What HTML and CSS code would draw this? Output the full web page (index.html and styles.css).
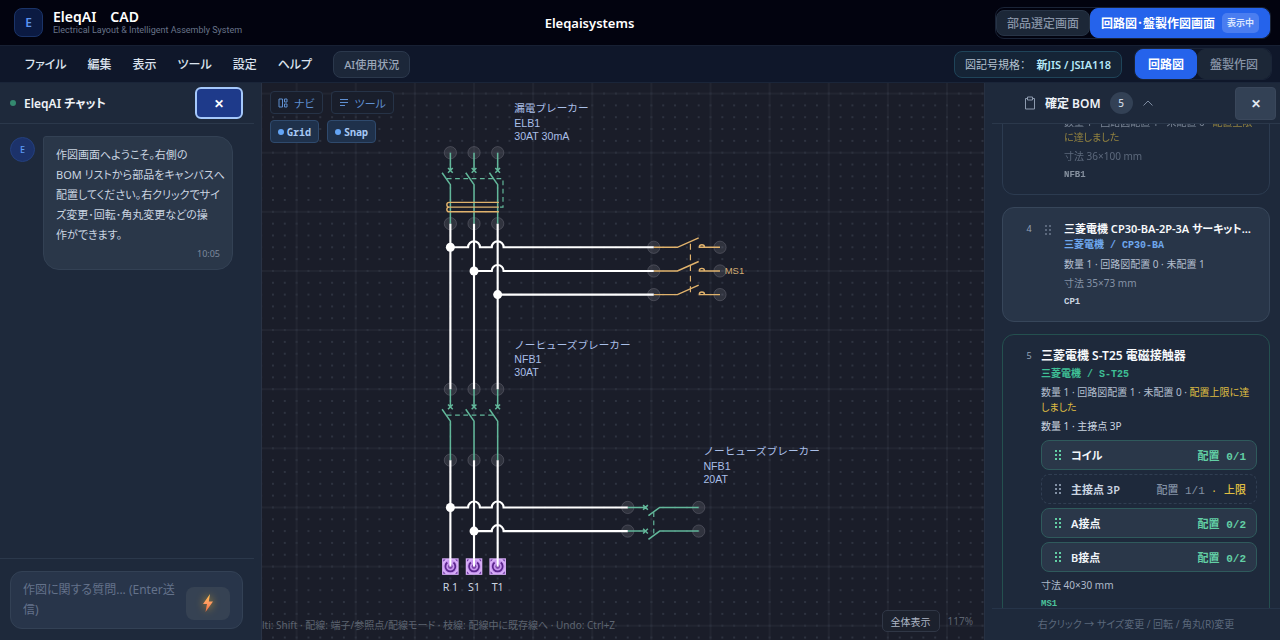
FILE: index.html
```html
<!DOCTYPE html>
<html lang="ja">
<head>
<meta charset="utf-8">
<title>EleqAI CAD</title>
<link rel="stylesheet" href="styles.css">
</head>
<body>
<div class="app">
  <header class="topbar">
    <div class="brand">
      <div class="logo">E</div>
      <div>
        <h1 class="brand-name">EleqAI　CAD</h1>
        <p class="brand-sub">Electrical Layout &amp; Intelligent Assembly System</p>
      </div>
    </div>
    <div class="project">Eleqaisystems</div>
    <div class="screens">
      <div class="switch">
        <button class="switch-btn">部品選定画面</button>
        <button class="switch-btn active">回路図･盤製作図画面 <span class="now">表示中</span></button>
      </div>
    </div>
  </header>

  <nav class="menubar">
    <button class="menu">ファイル</button>
    <button class="menu">編集</button>
    <button class="menu">表示</button>
    <button class="menu">ツール</button>
    <button class="menu">設定</button>
    <button class="menu">ヘルプ</button>
    <button class="usage">AI使用状況</button>
    <button class="standard"><span>図記号規格：</span><b>新JIS / JSIA118</b></button>
    <div class="switch views">
      <button class="switch-btn active">回路図</button>
      <button class="switch-btn">盤製作図</button>
    </div>
  </nav>

  <main class="work">
    <aside class="chat">
      <div class="chat-head">
        <i class="online"></i>
        <h2 class="chat-title">EleqAI チャット</h2>
        <button class="chat-close" aria-label="閉じる">✕</button>
      </div>
      <div class="chat-body">
        <div class="avatar">E</div>
        <div class="bubble">
          <p class="bubble-text">作図画面へようこそ。右側の<br>BOM リストから部品をキャンバスへ<br>配置してください。右クリックでサイ<br>ズ変更･回転･角丸変更などの操<br>作ができます。</p>
          <time class="bubble-time">10:05</time>
        </div>
      </div>
      <div class="chat-foot">
        <div class="composer">
          <textarea class="prompt" rows="2" aria-label="質問" placeholder="作図に関する質問... (Enter送信)"></textarea>
          <button class="send" aria-label="送信">
            <svg width="16" height="20" viewBox="0 0 16 20"><defs><linearGradient id="bolt" x1="0" y1="0" x2="0" y2="1"><stop offset="0" stop-color="#ffc24a"/><stop offset=".5" stop-color="#ff9a62"/><stop offset="1" stop-color="#f36b3a"/></linearGradient></defs><path d="M10 1 3 11h4l-1.500 8L13 8.500H8.800z" fill="url(#bolt)"/></svg>
          </button>
        </div>
      </div>
    </aside>

    <section class="canvas">
      <svg class="drawing" aria-label="回路図">
        <defs>
          <pattern id="dots" width="10" height="10" x="-5" y="-5" patternUnits="userSpaceOnUse"><circle cx="5" cy="5" r=".8" fill="#353b49"/></pattern>
          <pattern id="major" width="50" height="50" x="-25" y="-25" patternUnits="userSpaceOnUse"><path d="M25 0V50M0 25H50" stroke="#292e3b" stroke-width=".8"/></pattern>
          <g id="pole">
            <path d="M0 0V15M-2 13 2 17M2 13-2 17M-7 17 0 27V60"/>
          </g>
          <g id="ms">
            <path d="M0 0H20L38-8M38 0H56M38.500 0a2.200 2.200 0 0 1 4.400 0"/>
          </g>
          <g id="sidepole"><path d="M0 0H15M13-2 17 2M17-2 13 2M17.500 7 27 0H60"/></g>
          <circle id="port" r="5.200" fill="#8c8c98" fill-opacity=".2" stroke="#888894" stroke-opacity=".35" stroke-width=".8"/>
          <g id="terminal">
            <rect x="-7" y="-7" width="14" height="14" fill="#d8aef8"/>
            <path d="M-6-4V-6H-4ZM6-4V-6H4ZM-6 4V6H-4ZM6 4V6H4Z" fill="#6b34a0"/>
            <circle r="5.800" fill="#c795ee"/>
            <path d="M-2.600-3.400A4.200 4.200 0 1 0 2.600-3.400" fill="none" stroke="#5b268d" stroke-width="1.500"/>
            <circle r="2" fill="#7c46aa"/>
            <path d="M0-7V0" stroke="#fff" stroke-width="1.700"/>
          </g>
        </defs>
        <g transform="translate(152.900 69.700) scale(1.1825)">
          <rect x="-140" y="-70" width="1800" height="1200" fill="url(#dots)"/>
          <rect x="-140" y="-70" width="1800" height="1200" fill="url(#major)"/>
          <g>
            <use href="#port" x="30" y="0"/><use href="#port" x="50" y="0"/><use href="#port" x="70" y="0"/>
            <use href="#port" x="30" y="60"/><use href="#port" x="50" y="60"/><use href="#port" x="70" y="60"/>
            <use href="#port" x="30" y="200"/><use href="#port" x="50" y="200"/><use href="#port" x="70" y="200"/>
            <use href="#port" x="30" y="260"/><use href="#port" x="50" y="260"/><use href="#port" x="70" y="260"/>
            <use href="#port" x="202" y="80"/><use href="#port" x="202" y="100"/><use href="#port" x="202" y="120"/>
            <use href="#port" x="258" y="80"/><use href="#port" x="258" y="100"/><use href="#port" x="258" y="120"/>
            <use href="#port" x="180" y="300"/><use href="#port" x="180" y="320"/>
            <use href="#port" x="240" y="300"/><use href="#port" x="240" y="320"/>
          </g>
          <g class="green">
            <use href="#pole" x="30" y="0"/><use href="#pole" x="50" y="0"/><use href="#pole" x="70" y="0"/>
            <path class="dash" d="M27 22H74.500V46H71"/>
            <use href="#pole" x="30" y="200"/><use href="#pole" x="50" y="200"/><use href="#pole" x="70" y="200"/>
            <path class="dash" d="M27 222H67"/>
            <use href="#sidepole" x="180" y="300"/><use href="#sidepole" x="180" y="320"/>
            <path class="dash" d="M202 304V323"/>
          </g>
          <g class="orange">
            <path d="M71 42H29a2 2 0 0 0 0 4H71M29 46a2 2 0 0 0 0 4H71"/>
            <use href="#ms" x="202" y="80"/><use href="#ms" x="202" y="100"/><use href="#ms" x="202" y="120"/>
            <path class="dash link" d="M233 77V122"/>
          </g>
          <g class="wire">
            <path d="M30 60V200M50 60V200M70 60V200M30 260V350M50 260V350M70 260V350"/>
            <path d="M30 80H45a5 5 0 0 1 10 0H65a5 5 0 0 1 10 0H202M50 100H65a5 5 0 0 1 10 0H202M70 120H202"/>
            <path d="M30 300H45a5 5 0 0 1 10 0H65a5 5 0 0 1 10 0H180M50 320H65a5 5 0 0 1 10 0H180"/>
          </g>
          <g fill="#fff">
            <circle cx="30" cy="80" r="3.800"/><circle cx="50" cy="100" r="3.800"/><circle cx="70" cy="120" r="3.800"/>
            <circle cx="30" cy="300" r="3.800"/><circle cx="50" cy="320" r="3.800"/>
          </g>
          <use href="#terminal" x="30" y="350"/><use href="#terminal" x="50" y="350"/><use href="#terminal" x="70" y="350"/>
          <g class="part">
            <text x="84" y="-34">漏電ブレーカー</text><text x="84" y="-22">ELB1</text><text x="84" y="-11">30AT 30mA</text>
            <text x="84" y="166">ノーヒューズブレーカー</text><text x="84" y="178">NFB1</text><text x="84" y="189">30AT</text>
            <text x="244" y="256">ノーヒューズブレーカー</text><text x="244" y="268">NFB1</text><text x="244" y="279">20AT</text>
          </g>
          <text class="tag" x="262" y="103">MS1</text>
          <g class="pin">
            <text x="30" y="371">R 1</text><text x="50" y="371">S1</text><text x="70" y="371">T1</text>
          </g>
        </g>
      </svg>
      <div class="tools">
        <div class="tool-row">
          <button class="tool"><svg width="10" height="10" viewBox="0 0 10 10" fill="none" stroke="currentColor"><path d="M1 1H4.500V9H1zM6.500 1H9V4H6.500zM6.500 6H9V9H6.500z"/></svg>ナビ</button>
          <button class="tool"><svg width="10" height="10" viewBox="0 0 10 10" fill="none" stroke="currentColor"><path d="M1 1.500H9M1 4.500H9M1 7.500H6"/></svg>ツール</button>
        </div>
        <div class="tool-row">
          <button class="tool on"><i class="led"></i>Grid</button>
          <button class="tool on"><i class="led"></i>Snap</button>
        </div>
      </div>
      <div class="statusline">
        <span class="hints">lti: Shift · 配線: 端子/参照点/配線モード · 枝線: 配線中に既存線へ · Undo: Ctrl+Z</span>
        <button class="fit">全体表示</button>
        <span class="zoom">117%</span>
      </div>
    </section>

    <aside class="bom">
      <div class="bom-head">
        <svg width="12" height="14" viewBox="0 0 12 14" fill="none" stroke="#8d9aae"><path d="M3.500 2.500H1.500V13H10.500V2.500H8.500"/><path d="M3.500 1H8.500V4H3.500z"/></svg>
        <h2 class="bom-title">確定 BOM</h2>
        <span class="count">5</span>
        <svg width="12" height="8" viewBox="0 0 12 8" fill="none" stroke="#7d8aa0"><path d="M1.500 6.500 6 2l4.500 4.500"/></svg>
        <button class="bom-close" aria-label="閉じる">✕</button>
      </div>
      <div class="bom-scroll">
        <div class="bom-list">
          <article class="card placed">
            <span class="no"></span><span class="grip"></span>
            <div class="info">
              <p class="qty">数量 1 · 回路図配置 1 · 未配置 0 · <em>配置上限に達しました</em></p>
              <p class="dim">寸法 36×100 mm</p>
              <p class="ref">NFB1</p>
            </div>
          </article>
          <article class="card open">
            <span class="no">4</span>
            <span class="grip"><svg width="8" height="10" viewBox="0 0 8 10"><path d="M1 0h2v2H1zM5 0h2v2H5zM1 4h2v2H1zM5 4h2v2H5zM1 8h2v2H1zM5 8h2v2H5z" fill="currentColor"/></svg></span>
            <div class="info">
              <h3 class="name">三菱電機 CP30-BA-2P-3A サーキットプロテクタ</h3>
              <p class="maker">三菱電機 / CP30-BA</p>
              <p class="qty">数量 1 · 回路図配置 0 · 未配置 1</p>
              <p class="dim">寸法 35×73 mm</p>
              <p class="ref">CP1</p>
            </div>
          </article>
          <article class="card multi">
            <span class="no">5</span>
            <div class="info">
              <h3 class="name">三菱電機 S-T25 電磁接触器</h3>
              <p class="maker">三菱電機 / S-T25</p>
              <p class="qty">数量 1 · 回路図配置 1 · 未配置 0 · <em>配置上限に達しました</em></p>
              <p class="parts-head">数量 1 · 主接点 3P</p>
              <ul class="parts">
                <li class="chip"><svg width="8" height="10" viewBox="0 0 8 10"><path d="M1 0h2v2H1zM5 0h2v2H5zM1 4h2v2H1zM5 4h2v2H5zM1 8h2v2H1zM5 8h2v2H5z" fill="currentColor"/></svg><b>コイル</b><span>配置 0/1</span></li>
                <li class="chip full"><svg width="8" height="10" viewBox="0 0 8 10"><path d="M1 0h2v2H1zM5 0h2v2H5zM1 4h2v2H1zM5 4h2v2H5zM1 8h2v2H1zM5 8h2v2H5z" fill="currentColor"/></svg><b>主接点 3P</b><span>配置 1/1<em>· 上限</em></span></li>
                <li class="chip"><svg width="8" height="10" viewBox="0 0 8 10"><path d="M1 0h2v2H1zM5 0h2v2H5zM1 4h2v2H1zM5 4h2v2H5zM1 8h2v2H1zM5 8h2v2H5z" fill="currentColor"/></svg><b>A接点</b><span>配置 0/2</span></li>
                <li class="chip"><svg width="8" height="10" viewBox="0 0 8 10"><path d="M1 0h2v2H1zM5 0h2v2H5zM1 4h2v2H1zM5 4h2v2H5zM1 8h2v2H1zM5 8h2v2H5z" fill="currentColor"/></svg><b>B接点</b><span>配置 0/2</span></li>
              </ul>
              <p class="dim">寸法 40×30 mm</p>
              <p class="ref">MS1</p>
            </div>
          </article>
        </div>
      </div>
      <footer class="bom-foot">右クリック → サイズ変更 / 回転 / 角丸(R)変更</footer>
    </aside>
  </main>
</div>
</body>
</html>
```
FILE: styles.css
```css
* { box-sizing: border-box; }
body, h1, h2, h3, p, ul { margin: 0; padding: 0; }
body {
  font-family: "Noto Sans", "Noto Sans CJK JP", sans-serif;
  font-size: 12px;
  color: #e2e8f0;
  background: #1e293b;
  font-feature-settings: "palt";
}
button, textarea { font: inherit; font-feature-settings: inherit; color: inherit; margin: 0; }
button { cursor: pointer; white-space: nowrap; display: inline-flex; align-items: center; justify-content: center; }
em { font-style: normal; }
ul { list-style: none; }

.app { display: flex; flex-direction: column; height: 100vh; overflow: hidden; }

.topbar {
  display: grid; grid-template-columns: 1fr auto 1fr; align-items: center;
  height: 46px; flex: none; padding: 0 9px 0 14px;
  background: #02030f; border-bottom: 1px solid #172033;
}
.brand { display: flex; align-items: center; gap: 10px; }
.logo {
  width: 29px; height: 29px; border-radius: 8px; border: 1px solid #1b3468; background: #0b1a42;
  color: #5c94f2; font-weight: 600; font-size: 12px; display: grid; place-items: center;
}
.brand-name { font-size: 14px; line-height: 16px; font-weight: 600; color: #fff; font-feature-settings: normal; }
.brand-sub { font: 9px/11px Roboto, sans-serif; color: #68748a; white-space: nowrap; }
.project { font-size: 13px; font-weight: 600; color: #fff; margin-right: 106px; }
.screens { display: flex; justify-content: flex-end; }
.switch { display: flex; align-items: center; border: 1px solid #1a2437; border-radius: 9px; }
.switch-btn {
  height: 26px; padding: 0 10px; border: 1px solid #273446; border-radius: 8px; background: #1c2737;
  color: #8793a6; font-weight: 500; font-size: 12px; gap: 7px;
}
.switch-btn.active { height: 30px; background: #2563eb; border-color: #2563eb; color: #fff; font-weight: 600; }
.now { background: #4a7df0; border-radius: 5px; font-size: 9px; line-height: 20px; padding: 0 5px; color: #dbe7ff; }

.menubar {
  display: flex; align-items: center; height: 37px; flex: none; padding: 0 8px 0 25px;
  background: #0f172a; border-bottom: 1px solid #1a2539;
}
.menu { border: 0; background: none; padding: 0; margin-right: 21px; font-weight: 500; color: #dbe3ee; }
.usage { height: 27px; padding: 0 10px; border: 1px solid #2b384c; border-radius: 8px; background: #1c2739; color: #9aa6b8; font-size: 11px; font-weight: 500; }
.standard {
  margin-left: auto; height: 27px; padding: 0 10px; gap: 11px; border: 1px solid #1f4459; border-radius: 8px;
  background: #152436; font-size: 11px; color: #b3c0d0;
}
.standard b { font-weight: 600; color: #b5e8f8; }
.views { margin-left: 12px; }
.views .switch-btn { padding: 0 12px; height: 30px; border-color: #1c2737; }
.views .switch-btn.active { border-color: #2563eb; }

.work { flex: 1; min-height: 0; display: grid; grid-template-columns: 262px minmax(0, 1fr) 296px; }

.chat { display: flex; flex-direction: column; background: #1e293b; border-right: 1px solid #2a3345; }
.chat-head { height: 41px; flex: none; display: flex; align-items: center; padding: 0 11px 0 10px; border-bottom: 1px solid #2b384b; margin-right: 7px; }
.online { width: 6px; height: 6px; border-radius: 50%; background: #34896f; margin-right: 8px; }
.chat-title { font-size: 12px; font-weight: 600; color: #eef2f7; }
.chat-close { margin-left: auto; width: 48px; height: 32px; border: 2px solid #a5c8fb; border-radius: 6px; background: #1e3a8a; color: #fff; font-weight: 700; }
.chat-body { flex: 1; display: flex; align-items: flex-start; gap: 8px; padding: 12px 28px 0 10px; }
.avatar { flex: none; width: 25px; height: 25px; margin-top: 1px; border-radius: 50%; background: #1c326a; border: 1px solid #24407e; color: #5b9af5; display: grid; place-items: center; font-size: 9px; font-weight: 500; }
.bubble { flex: 1; min-width: 0; border: 1px solid #334154; background: #2a3749; border-radius: 3px 16px 16px 16px; padding: 8px 8px 8px 12px; }
.bubble-text { font-size: 11px; line-height: 20px; color: #cbd5e1; white-space: nowrap; }
.bubble-time { display: block; text-align: right; font-size: 9px; line-height: 14px; margin: 2px 4px 0 0; color: #7b889c; }
.chat-foot { margin-right: 7px; padding: 12px 11px 11px 10px; border-top: 1px solid #2b384b; }
.composer { display: flex; align-items: center; border: 1px solid #334155; border-radius: 12px; background: #28354a; padding: 8px 12px; }
.prompt { flex: 1; min-width: 0; height: 40px; line-height: 20px; padding: 0; border: 0; outline: 0; resize: none; background: none; overflow: hidden; }
.prompt::placeholder { color: #64728a; opacity: 1; }
.send { width: 44px; height: 33px; margin-left: 6px; margin-top: 6px; border: 0; border-radius: 8px; background: #364253; padding: 0; }
.send svg { filter: drop-shadow(0 0 4px #c99a2a); }

.canvas { display: grid; grid-template-rows: minmax(0, 1fr); background: #1a1d29; overflow: hidden; }
.canvas > * { grid-area: 1 / 1; }
.drawing { width: 100%; height: 100%; display: block; }
.green, .orange, .wire { fill: none; stroke-width: 1.3px; }
.green { stroke: #62b79a; }
.orange { stroke: #e0b26c; stroke-width: 1.2px; }
.wire { stroke: #fff; stroke-width: 1.8px; }
.dash { stroke-dasharray: 4 3; stroke-width: 1px; }
.link { stroke-dasharray: 5 4; }
.part, .tag { font-family: "Liberation Sans", "Noto Sans CJK JP", sans-serif; font-size: 9px; fill: #a9bfe8; font-feature-settings: normal; }
.tag { font-size: 8px; fill: #d5ad74; }
.pin { font-size: 9px; fill: #cbd5e1; text-anchor: middle; }

.tools { align-self: start; justify-self: start; display: grid; gap: 6px; padding: 8px; z-index: 1; }
.tool-row { display: flex; gap: 8px; }
.tool { height: 23px; padding: 0 7px; gap: 6px; border: 1px solid #263347; border-radius: 4px; background: #191e2b; color: #5f8fd0; font-size: 11px; }
.tool.on { font-family: "Noto Sans Mono", "Liberation Mono", monospace; font-weight: 700; font-size: 10px; gap: 3px; background: #1f314b; border-color: #2f4a6d; color: #a6c8f4; }
.led { width: 6px; height: 6px; border-radius: 50%; background: #64a5f6; }
.statusline { align-self: end; z-index: 1; display: flex; align-items: center; padding: 0 11px 8px 0; font-size: 10px; color: #5d6470; }
.hints { flex: 1; white-space: nowrap; padding-top: 6px; }
.fit { height: 22px; padding: 0 8px; border: 1px solid #303746; border-radius: 5px; background: #1c212d; color: #aeb7c6; font-size: 10px; margin-right: 8px; }
.zoom { font-size: 10px; }

.bom { display: flex; flex-direction: column; min-height: 0; background: #1e293b; border-left: 1px solid #263042; }
.bom-head { height: 41px; flex: none; display: flex; align-items: center; gap: 9px; padding: 0 4px 0 32px; margin-left: 7px; border-bottom: 1px solid #2b384b; }
.bom-title { font-size: 12px; font-weight: 600; color: #eef2f7; }
.count { width: 23px; height: 22px; border-radius: 50%; background: #334155; display: grid; place-items: center; font-size: 10px; font-weight: 500; color: #cbd5e1; }
.bom-close { margin-left: auto; width: 41px; height: 33px; border: 1px solid #3a475b; border-radius: 4px; background: #334155; font-weight: 600; padding: 0; }
.bom-scroll { flex: 1; min-height: 0; overflow: hidden; }
.bom-list { display: grid; grid-template-columns: minmax(0, 1fr); gap: 12px; padding: 0 10px 0 17px; margin-top: -24px; }
.card { display: flex; border: 1px solid #2c3b50; border-radius: 12px; padding: 12px; }
.card.open { background: #283548; border-color: #37465a; padding-right: 8px; }
.card.multi { border-color: #24504f; padding-bottom: 24px; }
.placed .info { opacity: .6; }
.no { width: 26px; flex: none; text-align: center; font-size: 9px; line-height: 18px; color: #94a3b8; padding-left: 2px; }
.grip { width: 23px; flex: none; padding: 2px 0 0 3px; color: #5b687c; }
.info { flex: 1; min-width: 0; }
.name { font-size: 12px; line-height: 17px; font-weight: 600; color: #f8fafc; white-space: nowrap; overflow: hidden; text-overflow: ellipsis; }
.open .name { font-size: 11px; }
.maker { font: 600 10px/18px "Liberation Mono", "Noto Sans CJK JP", monospace; color: #6fa8ee; }
.multi .maker { color: #3fbf95; margin-top: 2px; }
.qty, .parts-head { font-size: 10px; line-height: 15px; margin-top: 2px; color: #b3bfcf; }
.multi .qty { margin-top: 1px; }
.qty em { color: #dfbd42; }
.dim { font-size: 10px; line-height: 15px; margin-top: 4px; color: #8592a6; }
.ref { font: 600 9px/14px "Liberation Mono", monospace; margin-top: 4px; color: #cbd5e1; }
.multi .parts-head { margin-top: 4px; color: #cbd5e1; }
.multi .dim { color: #aebaca; margin-top: 6px; }
.multi .ref { color: #4cc39c; }
.parts { display: grid; gap: 4px; margin-top: 6px; }
.chip { height: 30px; display: flex; align-items: center; gap: 9px; padding: 0 10px 0 12px; border: 1px solid #2f5a5c; border-radius: 8px; background: #2a3749; color: #62cfa5; font-size: 11px; }
.chip b { font-weight: 600; color: #f1f5f9; }
.chip span { margin-left: auto; font-family: "Liberation Mono", "Noto Sans CJK JP", monospace; font-weight: 600; }
.chip.full { background: none; border: 1px dashed #303e52; color: #8290a4; }
.chip.full b { color: #cbd5e1; }
.chip.full span { font-weight: 500; }
.chip.full em { color: #dfbd42; margin-left: 6px; }
.bom-foot { flex: none; height: 32px; margin-left: 7px; border-top: 1px solid #263449; text-align: center; line-height: 31px; font-size: 10px; color: #5b687c; }
```
